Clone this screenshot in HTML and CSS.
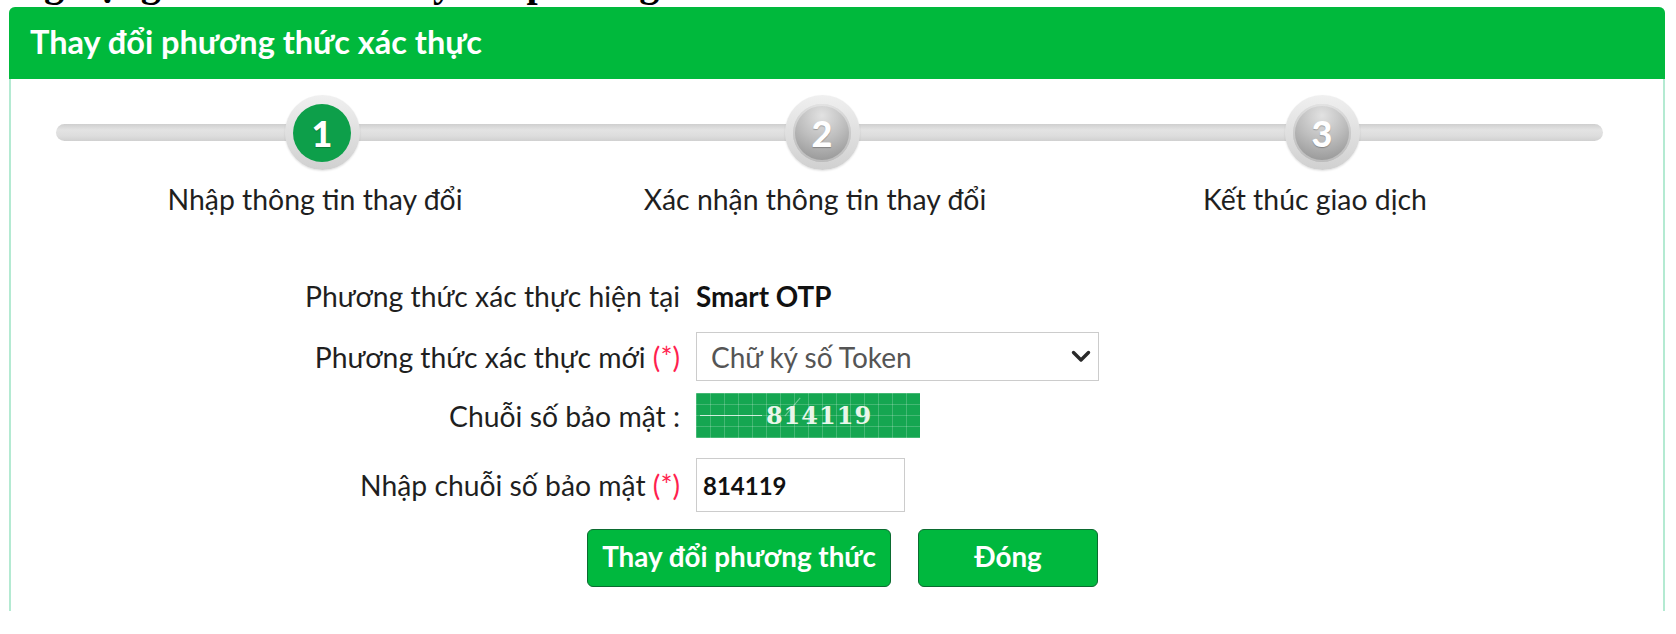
FILE: index.html
```html
<!DOCTYPE html>
<html lang="vi">
<head>
<meta charset="utf-8">
<title>Thay đổi phương thức xác thực</title>
<link rel="stylesheet" href="styles.css">
</head>
<body>
<h1 class="page-title">Ứng dụng Smart OTP thay đổi phương thức</h1>
<div class="card">
  <div class="card-header">Thay đổi phương thức xác thực</div>
  <div class="card-body">
    <div class="steps">
      <div class="step">
        <div class="circle active"><span>1</span></div>
        <div class="step-label">Nhập thông tin thay đổi</div>
      </div>
      <div class="step">
        <div class="circle todo"><span>2</span></div>
        <div class="step-label">Xác nhận thông tin thay đổi</div>
      </div>
      <div class="step">
        <div class="circle todo"><span>3</span></div>
        <div class="step-label">Kết thúc giao dịch</div>
      </div>
    </div>

    <form class="form">
      <div class="row row-current">
        <label class="row-label">Phương thức xác thực hiện tại</label>
        <div class="row-field value-strong">Smart OTP</div>
      </div>
      <div class="row row-select">
        <label class="row-label">Phương thức xác thực mới <span class="req">(*)</span></label>
        <div class="row-field">
          <div class="select-wrap">
            <select class="select">
              <option>Chữ ký số Token</option>
            </select>
            <svg class="chevron" width="20" height="13" viewBox="0 0 20 13"><path d="M2.5 2.5 L10 10 L17.5 2.5" fill="none" stroke="#2a2a2a" stroke-width="3.4" stroke-linecap="round" stroke-linejoin="round"/></svg>
          </div>
        </div>
      </div>
      <div class="row row-captcha">
        <label class="row-label">Chuỗi số bảo mật :</label>
        <div class="row-field">
          <div class="captcha"><span class="captcha-line"></span><span class="captcha-slash"></span><span class="captcha-text">814119</span></div>
        </div>
      </div>
      <div class="row row-code">
        <label class="row-label">Nhập chuỗi số bảo mật <span class="req">(*)</span></label>
        <div class="row-field">
          <input class="input" type="text" value="814119">
        </div>
      </div>
      <div class="actions">
        <button type="button" class="btn btn-wide">Thay đổi phương thức</button>
        <button type="button" class="btn btn-close">Đóng</button>
      </div>
    </form>
  </div>
</div>
</body>
</html>
```
FILE: styles.css
```css
* { box-sizing: border-box; }

body {
  margin: 0;
  background: #ffffff;
  font-family: Lato, "Noto Sans", sans-serif;
  color: #1f1f1f;
  overflow: hidden;
}

.page-title {
  font-family: "Liberation Serif", serif;
  font-weight: bold;
  font-size: 40px;
  line-height: 40px;
  height: 40px;
  margin: -37px 0 4px -10px;
  white-space: nowrap;
  color: #000;
}

.card {
  margin: 0 11px 0 9px;
  height: 604px;
  border-left: 2px solid #b4ead2;
  border-right: 2px solid #b4ead2;
  border-radius: 6px 6px 0 0;
}

.card-header {
  margin: 0 -2px;
  height: 72px;
  background: #00b93c;
  border-radius: 6px 6px 0 0;
  color: #ffffff;
  font-size: 32.5px;
  font-weight: 700;
  padding-left: 21px;
  padding-bottom: 3px;
  display: flex;
  align-items: center;
}

.steps {
  position: relative;
  display: flex;
  padding-left: 61px;
  margin-top: 16px;
}

.steps::before {
  content: "";
  position: absolute;
  left: 45px;
  width: 1547px;
  top: 29px;
  height: 17px;
  border-radius: 9px;
  background: linear-gradient(#cfcfcf, #e3e3e3 35%, #dddddd 70%, #d0d0d0);
}

.step {
  width: 500px;
  display: flex;
  flex-direction: column;
  align-items: center;
}

.circle {
  position: relative;
  z-index: 1;
  width: 75px;
  height: 75px;
  border-radius: 50%;
  background: linear-gradient(#f0f0f0, #d0d0d0);
  box-shadow: 0 1px 2px rgba(0, 0, 0, 0.12);
  display: flex;
  align-items: center;
  justify-content: center;
}

.circle span {
  width: 58px;
  height: 58px;
  border-radius: 50%;
  display: flex;
  align-items: center;
  justify-content: center;
  color: #ffffff;
  font-weight: 900;
  font-size: 36px;
  text-shadow: 0 1px 1px rgba(0, 0, 0, 0.25);
}

.circle.active span {
  background: #0d9f4a;
}

.circle.todo span {
  background: radial-gradient(circle at 50% 20%, #e2e2e2 0%, #bdbdbd 45%, #8a8a8a 100%);
  box-shadow: inset 0 0 0 2px rgba(255, 255, 255, 0.35);
}

.step-label {
  margin-top: 13px;
  margin-right: 14px;
  font-size: 28.4px;
  line-height: 32px;
  color: #1f1f1f;
}

.form {
  margin-top: 61px;
}

.row {
  display: flex;
  align-items: center;
}

.row-label {
  width: 669px;
  flex: none;
  text-align: right;
  font-size: 28.3px;
  color: #1f1f1f;
  white-space: nowrap;
}

.row-field {
  margin-left: 16px;
}

.value-strong {
  font-weight: 700;
  font-size: 27.8px;
  color: #111;
}

.req {
  color: #ff1f4f;
}

.row-current {
  height: 40px;
}

.row-select {
  margin-top: 16px;
}

.row-captcha {
  margin-top: 12px;
}

.row-code {
  margin-top: 20px;
}

.select-wrap {
  position: relative;
  width: 403px;
  height: 49px;
}

.select {
  appearance: none;
  -webkit-appearance: none;
  width: 100%;
  height: 100%;
  border: 1px solid #cccccc;
  border-radius: 0;
  background: #ffffff;
  font-family: Lato, "Noto Sans", sans-serif;
  font-size: 28px;
  color: #555555;
  padding-left: 14px;
}

.chevron {
  position: absolute;
  right: 8px;
  top: 18px;
}

.captcha {
  position: relative;
  width: 224px;
  height: 45px;
  background-color: #15a651;
  background-image:
    repeating-linear-gradient(90deg, rgba(255,255,255,0.2) 0 1px, transparent 1px 14px),
    repeating-linear-gradient(0deg, rgba(255,255,255,0.2) 0 1px, transparent 1px 11px);
  display: flex;
  align-items: center;
  justify-content: center;
}

.captcha-line {
  position: absolute;
  left: 4px;
  top: 22px;
  width: 62px;
  height: 1px;
  background: rgba(255, 255, 255, 0.75);
}

.captcha-slash {
  position: absolute;
  left: 96px;
  top: 2px;
  width: 1px;
  height: 24px;
  background: rgba(255, 255, 255, 0.4);
  transform: rotate(40deg);
}

.captcha-text {
  position: relative;
  font-family: "DejaVu Serif", serif;
  font-weight: bold;
  font-size: 24px;
  letter-spacing: 1px;
  color: #e9f6ea;
  margin-left: 22px;
}

.input {
  width: 209px;
  height: 54px;
  border: 1px solid #cccccc;
  font-family: Lato, "Noto Sans", sans-serif;
  font-weight: 700;
  font-size: 24px;
  color: #111;
  padding-left: 6px;
}

.actions {
  margin-top: 17px;
  padding-left: 576px;
  display: flex;
  gap: 27px;
}

.btn {
  height: 58px;
  background: #00b83e;
  border: 1px solid #0b6b30;
  border-radius: 6px;
  color: #ffffff;
  font-family: Lato, "Noto Sans", sans-serif;
  font-weight: 700;
  font-size: 27.8px;
  padding: 0 0 3px;
}

.btn-wide {
  width: 304px;
}

.btn-close {
  width: 180px;
}
```
